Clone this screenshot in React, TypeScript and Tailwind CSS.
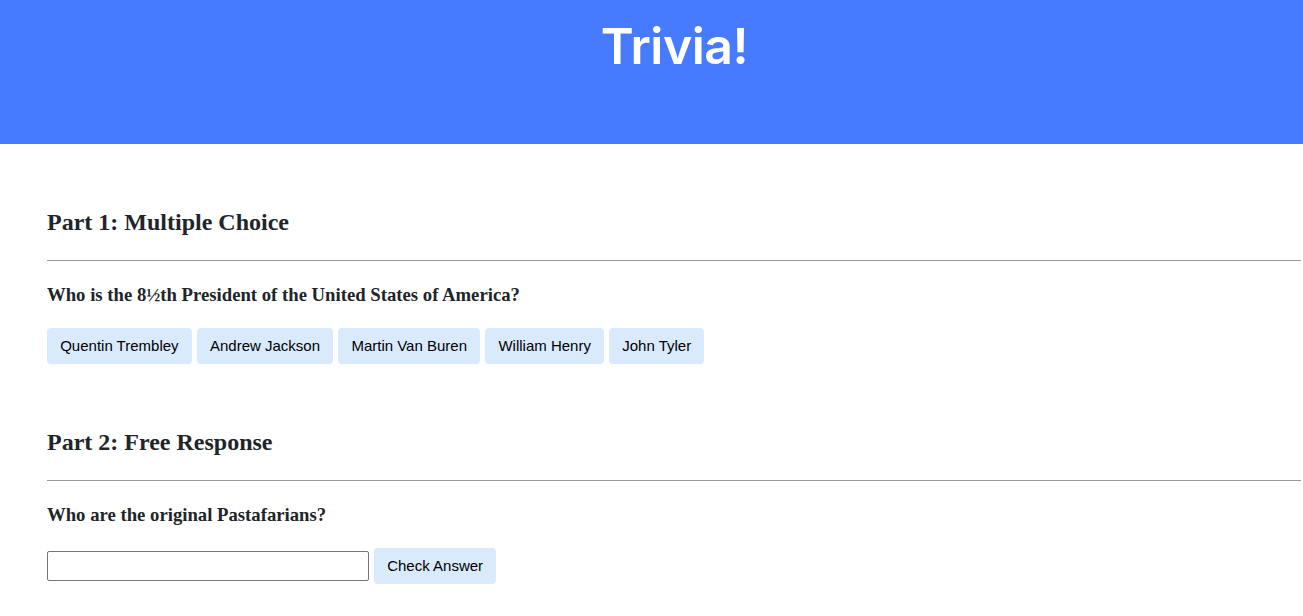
export default function App() {
  const choices = ["Quentin Trembley", "Andrew Jackson", "Martin Van Buren", "William Henry", "John Tyler"];
  return (
    <div className="min-h-screen bg-white">
      <header className="h-[144px] bg-[#477bff] flex justify-center pl-[46px]">
        <h1 className="mt-[14px] text-[50px] leading-[64px] font-semibold text-white tracking-[-0.5px]" style={{ fontFamily: "Inter, 'Open Sans', sans-serif" }}>
          Trivia!
        </h1>
      </header>
      <main className="pl-[47px] pr-[2px] text-[#212529]" style={{ fontFamily: "'Liberation Serif', serif" }}>
        <section className="pt-[64px]">
          <h2 className="text-[24px] font-bold leading-[28px]">Part 1: Multiple Choice</h2>
          <hr className="mt-[24px] border-t border-[#999]" />
          <h3 className="mt-[23px] text-[18.72px] font-bold leading-[22px]">Who is the 8½th President of the United States of America?</h3>
          <div className="mt-[22px] flex gap-[5px]" style={{ fontFamily: "'Liberation Sans', Arial, sans-serif" }}>
            {choices.map((c) => (
              <button key={c} className="h-[36px] px-[13.2px] bg-[#d9eafd] rounded-[4px] text-[15px] text-black">
                {c}
              </button>
            ))}
          </div>
        </section>
        <section className="pt-[64px]">
          <h2 className="text-[24px] font-bold leading-[28px]">Part 2: Free Response</h2>
          <hr className="mt-[24px] border-t border-[#999]" />
          <h3 className="mt-[23px] text-[18.72px] font-bold leading-[22px]">Who are the original Pastafarians?</h3>
          <div className="mt-[22px] flex items-center gap-[5px]" style={{ fontFamily: "'Liberation Sans', Arial, sans-serif" }}>
            <input className="w-[322px] h-[30px] border border-[#767676] rounded-[2px]" />
            <button className="h-[36px] px-[13.2px] bg-[#d9eafd] rounded-[4px] text-[15px] text-black">Check Answer</button>
          </div>
        </section>
      </main>
    </div>
  );
}
